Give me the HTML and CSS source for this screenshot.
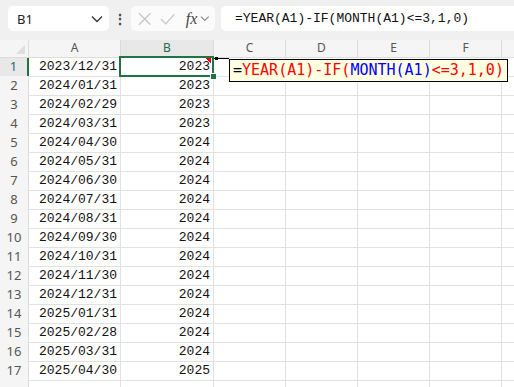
FILE: index.html
```html
<!DOCTYPE html>
<html lang="ja">
<head>
  <meta charset="UTF-8">
  <title>Sheet</title>
  <link rel="stylesheet" href="styles.css">
</head>
<body>
  <div class="toolbar">
    <div class="name-box">
      <span>B1</span>
      <svg width="12" height="8" viewBox="0 0 12 8"><path d="M1 1.5 L6 6.5 L11 1.5" fill="none" stroke="#333" stroke-width="1.3"/></svg>
    </div>
    <div class="dots">⋮</div>
    <div class="fx-box">
      <svg width="14" height="14" viewBox="0 0 14 14"><path d="M1 1 L13 13 M13 1 L1 13" stroke="#c4c4c4" stroke-width="1.2"/></svg>
      <svg width="16" height="14" viewBox="0 0 16 14"><path d="M1 7 L6 12 L15 2" fill="none" stroke="#c4c4c4" stroke-width="1.2"/></svg>
      <span class="fx">fx</span>
      <svg width="10" height="7" viewBox="0 0 10 7"><path d="M1 1.5 L5 5.5 L9 1.5" fill="none" stroke="#888" stroke-width="1.1"/></svg>
    </div>
    <div class="formula">=YEAR(A1)-IF(MONTH(A1)&lt;=3,1,0)</div>
  </div>

  <div class="sheet" id="sheet">
    <div class="row head">
      <div class="corner"></div>
      <div class="col-head">A</div>
      <div class="col-head sel">B</div>
      <div class="col-head">C</div>
      <div class="col-head">D</div>
      <div class="col-head">E</div>
      <div class="col-head">F</div>
      <div class="col-head"></div>
    </div>

    <div class="comment-line"></div>
    <div class="comment"><span class="k">=</span><span class="r">YEAR(A1)-IF(</span><span class="b">MONTH(A1)</span><span class="r">&lt;=3,1,0)</span></div>
  </div>

  <script>
    var data = [
      ["2023/12/31", 2023], ["2024/01/31", 2023], ["2024/02/29", 2023],
      ["2024/03/31", 2023], ["2024/04/30", 2024], ["2024/05/31", 2024],
      ["2024/06/30", 2024], ["2024/07/31", 2024], ["2024/08/31", 2024],
      ["2024/09/30", 2024], ["2024/10/31", 2024], ["2024/11/30", 2024],
      ["2024/12/31", 2024], ["2025/01/31", 2024], ["2025/02/28", 2024],
      ["2025/03/31", 2024], ["2025/04/30", 2025]
    ];
    var sheet = document.getElementById('sheet');
    var head = sheet.querySelector('.head');
    var html = '';
    data.forEach(function (d, i) {
      var n = i + 1;
      html += '<div class="row">' +
        '<div class="row-head' + (n === 1 ? ' sel' : '') + '">' + n + '</div>' +
        '<div class="cell">' + d[0] + '</div>' +
        '<div class="cell' + (n === 1 ? ' active' : '') + '">' + d[1] + '</div>' +
        '<div class="cell"></div><div class="cell"></div><div class="cell"></div><div class="cell"></div><div class="cell"></div>' +
        '</div>';
    });
    // row 18 is only partly visible at the bottom edge
    html += '<div class="row"><div class="row-head"></div>' +
      '<div class="cell"></div><div class="cell"></div><div class="cell"></div><div class="cell"></div>' +
      '<div class="cell"></div><div class="cell"></div><div class="cell"></div></div>';
    head.insertAdjacentHTML('afterend', html);
  </script>
</body>
</html>
```

FILE: styles.css
```css
body {
  margin: 0;
  width: 514px;
  height: 387px;
  overflow: hidden;
  background: #fff;
  font-family: "Noto Sans", sans-serif;
}

.toolbar {
  display: flex;
  align-items: center;
  height: 40px;
  box-sizing: border-box;
  padding: 0 0 3px 8px;
  background: #f0f0f0;
}

.name-box {
  display: flex;
  align-items: center;
  justify-content: space-between;
  width: 101px;
  height: 25px;
  box-sizing: border-box;
  padding: 0 6px 0 9px;
  background: #fff;
  border-radius: 5px;
  font-size: 13px;
  color: #222;
}

.dots {
  width: 22px;
  text-align: center;
  font-size: 14px;
  font-weight: bold;
  color: #444;
}

.fx-box {
  display: flex;
  align-items: center;
  gap: 9px;
  width: 84px;
  height: 25px;
  box-sizing: border-box;
  padding: 0 5px 0 7px;
  background: #fbfbfb;
  border-radius: 5px;
}

.fx {
  font-family: "Liberation Serif", serif;
  font-style: italic;
  font-size: 16px;
  color: #444;
  margin-left: 1px;
  margin-right: -6px;
}

.formula {
  flex: 1;
  margin-left: 6px;
  height: 25px;
  line-height: 25px;
  padding-left: 14px;
  background: #fff;
  border-radius: 5px 0 0 5px;
  font-family: "Liberation Mono", monospace;
  font-size: 13px;
  color: #111;
}

.sheet {
  position: relative;
}

.row {
  display: grid;
  grid-template-columns: 29px 92px 93px 72px 72px 72px 72px 72px;
  height: 19px;
}

.row.head {
  height: 17px;
}

.corner,
.col-head,
.row-head {
  box-sizing: border-box;
  background: #f5f5f5;
  border-right: 1px solid #dcdcdc;
  border-bottom: 1px solid #dcdcdc;
  font-size: 12px;
  color: #555;
}

.corner {
  position: relative;
}

.corner::after {
  content: "";
  position: absolute;
  right: 3px;
  bottom: 3px;
  border-left: 9px solid transparent;
  border-bottom: 9px solid #dedede;
}

.col-head {
  text-align: center;
  line-height: 16px;
}

.col-head.sel {
  background: #e8e8e8;
  color: #1e6b48;
  border-bottom: 2px solid #217346;
}

.row-head {
  text-align: center;
  line-height: 18px;
  font-size: 13px;
}

.row-head.sel {
  background: #e8e8e8;
  color: #1e6b6b;
  border-right: 2px solid #217346;
}

.cell {
  box-sizing: border-box;
  border-right: 1px solid #e1e1e1;
  border-bottom: 1px solid #e1e1e1;
  padding-right: 3px;
  text-align: right;
  line-height: 19px;
  font-family: "Liberation Mono", monospace;
  font-size: 13px;
  color: #111;
}

.cell.active {
  position: relative;
  background: linear-gradient(225deg, #e00 4px, transparent 4px) no-repeat right 2px top 1px / 6px 6px;
}

.cell.active::before {
  content: "";
  position: absolute;
  top: -1px;
  left: -2px;
  right: -1px;
  bottom: -1px;
  border: 2px solid #217346;
}

.cell.active::after {
  content: "";
  position: absolute;
  right: -4px;
  bottom: -4px;
  width: 5px;
  height: 5px;
  background: #217346;
  border: 1px solid #fff;
}

.comment-line {
  position: absolute;
  left: 214px;
  top: 18px;
  width: 15px;
  height: 1px;
  background: #000;
}

.comment-line::before {
  content: "";
  position: absolute;
  left: 1px;
  top: -1px;
  width: 3px;
  height: 3px;
  background: #000;
}

.comment {
  position: absolute;
  left: 229px;
  top: 19px;
  width: 279px;
  height: 23px;
  box-sizing: border-box;
  padding-left: 3px;
  background: #ffffe1;
  border: 1px solid #000;
  font-family: "DejaVu Sans Mono", monospace;
  font-size: 15px;
  line-height: 21px;
  white-space: nowrap;
}

.comment .k { color: #000; }
.comment .r { color: #f00; }
.comment .b { color: #00f; }
```
